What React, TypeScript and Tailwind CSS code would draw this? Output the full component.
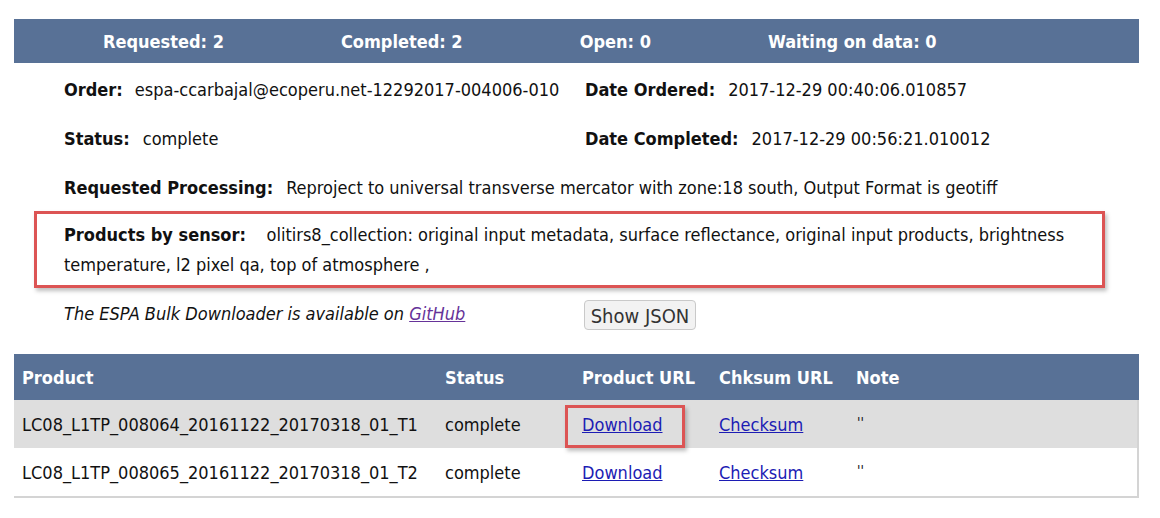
import React from "react";

const rows = [
  { product: "LC08_L1TP_008064_20161122_20170318_01_T1", status: "complete", shade: true, mark: true },
  { product: "LC08_L1TP_008065_20161122_20170318_01_T2", status: "complete", shade: false, mark: false },
];

export default function App() {
  return (
    <div className="min-h-screen bg-white text-[18px] text-[#111] pl-[14px] pr-[21px] pt-[19px] font-['DejaVu_Sans_Condensed','DejaVu_Sans',sans-serif]">
      {/* ── Order counts bar ── */}
      <div className="h-[44px] bg-[#587196] flex items-center pl-[89px] gap-[117px] text-white font-bold">
        <span>Requested: 2</span>
        <span>Completed: 2</span>
        <span>Open: 0</span>
        <span>Waiting on data: 0</span>
      </div>

      {/* ── Order details ── */}
      <div className="pl-[50px] pt-[2px]">
        <div className="grid grid-cols-[521px_1fr]">
          <div className="h-[49px] flex items-center">
            <span className="font-bold">Order:</span>
            <span className="ml-[12px]">espa-ccarbajal@ecoperu.net-12292017-004006-010</span>
          </div>
          <div className="h-[49px] flex items-center">
            <span className="font-bold">Date Ordered:</span>
            <span className="ml-[13px]">2017-12-29 00:40:06.010857</span>
          </div>
          <div className="h-[49px] flex items-center">
            <span className="font-bold">Status:</span>
            <span className="ml-[13px]">complete</span>
          </div>
          <div className="h-[49px] flex items-center">
            <span className="font-bold">Date Completed:</span>
            <span className="ml-[13px]">2017-12-29 00:56:21.010012</span>
          </div>
        </div>
        <div className="h-[48px] flex items-center">
          <span className="font-bold">Requested Processing:</span>
          <span className="ml-[13px]">
            Reproject to universal transverse mercator with zone:18 south, Output Format is geotiff
          </span>
        </div>
      </div>

      {/* Products by sensor (highlighted) */}
      <p className="ml-[20px] mr-[34px] border-[3px] border-[#dc5454] shadow-[2px_3px_4px_rgba(0,0,0,0.25)] pl-[27px] pr-4 pt-[6px] pb-[5px] leading-[30px]">
        <b>Products by sensor:</b>
        {"\u00a0\u00a0\u00a0\u00a0"}olitirs8_collection: original input metadata, surface reflectance, original input
        products, brightness temperature, l2 pixel qa, top of atmosphere ,
      </p>

      {/* Bulk downloader + JSON */}
      <div className="pl-[50px] mt-[9px] h-[32px] flex items-center">
        <span className="w-[520px] italic">
          The ESPA Bulk Downloader is available on{" "}
          <a href="#" className="underline text-[#663399]">GitHub</a>
        </span>
        <button className="h-[30px] w-[112px] bg-[#f2f2f2] border border-[#c9c9c9] rounded-[4px] text-[#333] text-[20px] mt-[3px]">
          Show JSON
        </button>
      </div>

      {/* ── Products table ── */}
      <div className="mt-[25px] border-2 border-t-0 border-[#d4d4d4]">
        <div className="h-[46px] bg-[#587196] text-white font-bold flex items-center -mx-[2px]">
          <div className="w-[425px] pl-[8px]">Product</div>
          <div className="w-[137px] pl-[6px]">Status</div>
          <div className="w-[137px] pl-[6px]">Product URL</div>
          <div className="w-[137px] pl-[6px]">Chksum URL</div>
          <div className="pl-[6px]">Note</div>
        </div>
        {rows.map((r) => (
          <div
            key={r.product}
            className={`h-[48px] flex items-center -ml-[2px] ${r.shade ? "bg-[#dedede]" : "bg-white"}`}
          >
            <div className="w-[425px] pl-[8px]">{r.product}</div>
            <div className="w-[137px] pl-[6px]">{r.status}</div>
            <div className="w-[137px] pl-[6px]">
              <span className="relative">
                <a href="#" className="underline text-[#1c1cb4]">Download</a>
                {r.mark && (
                  <span className="absolute -left-[17px] -right-[22px] -top-[9px] -bottom-[13px] border-[3px] border-[#dc5454] shadow-[2px_3px_4px_rgba(0,0,0,0.25)]" />
                )}
              </span>
            </div>
            <div className="w-[137px] pl-[6px]">
              <a href="#" className="underline text-[#1c1cb4]">Checksum</a>
            </div>
            <div className="pl-[7px] self-start pt-[12px] text-[14px]">''</div>
          </div>
        ))}
      </div>
    </div>
  );
}
